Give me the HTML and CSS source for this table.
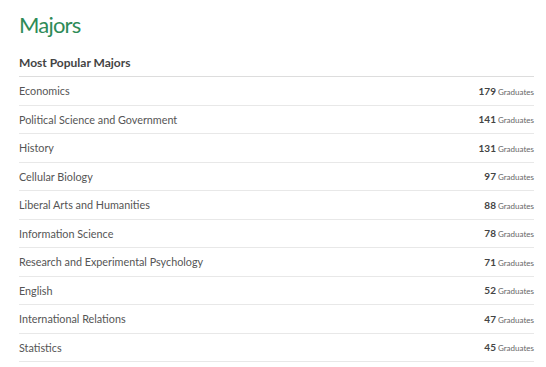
FILE: index.html
```html
<!DOCTYPE html>
<html lang="en">

<head>
    <meta charset="UTF-8">
    <meta name="viewport" content="width=device-width, initial-scale=1.0">
    <title>Majors</title>
    <link rel="stylesheet" href="styles.css">
</head>

<body>
    <div class="majors">
        <h2 class="title">Majors</h2>
        <div class="list-head">Most Popular Majors</div>
        <ul class="list">
            <li class="row"><span class="name">Economics</span><span class="count"><b>179</b> Graduates</span></li>
            <li class="row"><span class="name">Political Science and Government</span><span class="count"><b>141</b> Graduates</span></li>
            <li class="row"><span class="name">History</span><span class="count"><b>131</b> Graduates</span></li>
            <li class="row"><span class="name">Cellular Biology</span><span class="count"><b>97</b> Graduates</span></li>
            <li class="row"><span class="name">Liberal Arts and Humanities</span><span class="count"><b>88</b> Graduates</span></li>
            <li class="row"><span class="name">Information Science</span><span class="count"><b>78</b> Graduates</span></li>
            <li class="row"><span class="name">Research and Experimental Psychology</span><span class="count"><b>71</b> Graduates</span></li>
            <li class="row"><span class="name">English</span><span class="count"><b>52</b> Graduates</span></li>
            <li class="row"><span class="name">International Relations</span><span class="count"><b>47</b> Graduates</span></li>
            <li class="row"><span class="name">Statistics</span><span class="count"><b>45</b> Graduates</span></li>
        </ul>
    </div>
</body>

</html>
```

FILE: styles.css
```css
body {
    margin: 0;
    background: #fff;
    font-family: Lato, "Open Sans", sans-serif;
    color: #555;
}

.majors {
    padding: 10px 12px 0 19px;
}

.title {
    margin: 0;
    font-size: 22px;
    font-weight: normal;
    letter-spacing: -0.8px;
    color: #2e8b57;
    line-height: 30px;
}

.list-head {
    margin-top: 10px;
    font-size: 12px;
    font-weight: bold;
    color: #444;
    line-height: 26px;
    border-bottom: 1px solid #ddd;
}

.list {
    list-style: none;
    margin: 0;
    padding: 0;
}

.row {
    display: flex;
    justify-content: space-between;
    align-items: center;
    height: 27.5px;
    border-bottom: 1px solid #e8e8e8;
    font-size: 10.8px;
}

.count {
    font-size: 8px;
    color: #666;
}

.count b {
    font-size: 10px;
    color: #444;
}
```
